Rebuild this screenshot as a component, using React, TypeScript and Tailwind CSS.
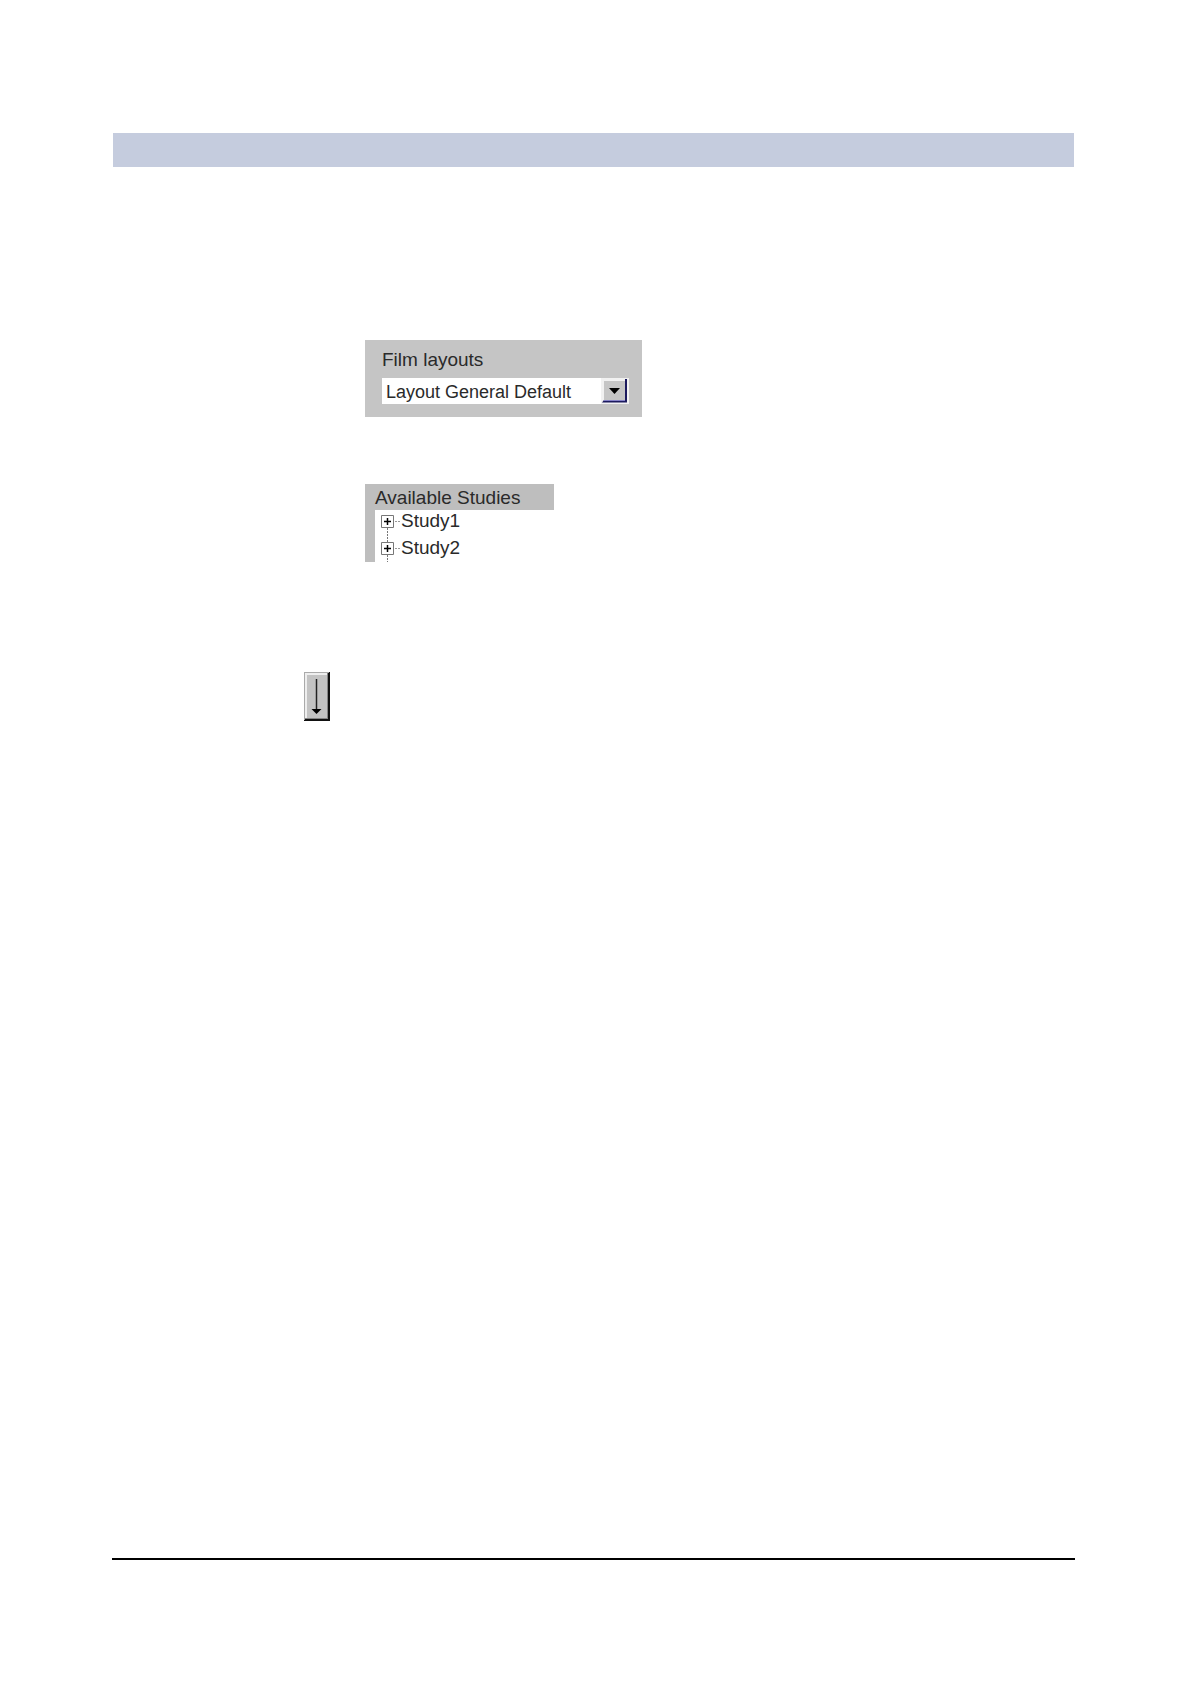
import React, { useState } from 'react';

const layouts = ['Layout General Default'];
const studies = ['Study1', 'Study2'];

const FilmLayouts: React.FC = () => {
  const [layout, setLayout] = useState(layouts[0]);

  return (
    <div className="w-[277px] bg-[#c5c5c5] pt-1.5 pr-[13px] pb-[13px] pl-[17px]">
      <label htmlFor="film-layout" className="block pb-1 text-[19px] leading-7">
        Film layouts
      </label>
      <div className="relative h-[26px]">
        <select
          id="film-layout"
          value={layout}
          onChange={(e) => setLayout(e.target.value)}
          className="block h-full w-full appearance-none bg-white pt-0.5 pl-1 leading-6 outline-none"
        >
          {layouts.map((name) => (
            <option key={name}>{name}</option>
          ))}
        </select>
        <svg
          className="pointer-events-none absolute top-0 right-0"
          width="28"
          height="26"
          viewBox="0 0 28 26"
          aria-hidden="true"
        >
          <path d="M0 0h28v26H0z" fill="#f1f1f1" />
          <path d="M1 24.500L3 22H24V1h2v23.500z" fill="#1c1a5e" />
          <path d="M3 3h21v19H3z" fill="#c5c5c5" />
          <path d="M3 22.500h21" stroke="#8581c8" />
          <path d="M8 10h11l-5.500 6z" fill="#000" />
        </svg>
      </div>
    </div>
  );
};

interface ExpandIconProps {
  first: boolean;
}

const ExpandIcon: React.FC<ExpandIconProps> = ({ first }) => (
  <svg width="20" height="27" viewBox="0 0 20 27" className="shrink-0" aria-hidden="true">
    <path d={first ? 'M6.500 18v9' : 'M6.500 0v27'} stroke="#777" strokeDasharray="2 1" />
    <path d="M14 11.500h5" stroke="#999" strokeDasharray="2 1" />
    <path d="M.5 5.500h12v12H.5z" fill="#fff" stroke="#777" />
    <path d="M3 11.500h7M6.500 8v7" stroke="#000" strokeWidth="1.500" />
  </svg>
);

const AvailableStudies: React.FC = () => (
  <div className="w-[189px] text-[19px]">
    <h2 className="bg-[#bebebe] pt-0.5 pl-[10px] leading-6">Available Studies</h2>
    <ul className="h-[52px] overflow-hidden border-l-[10px] border-[#bebebe] bg-white pl-[6px]">
      {studies.map((study, i) => (
        <li key={study} className="h-[27px]">
          <button type="button" className="flex items-start leading-[22px]">
            <ExpandIcon first={i === 0} />
            {study}
          </button>
        </li>
      ))}
    </ul>
  </div>
);

export default function App() {
  return (
    <div className="flex min-h-screen flex-col bg-white pt-[133px] pr-[115px] pb-[124px] pl-28 font-['Liberation_Sans',Arial,sans-serif] text-[18px] text-[#2a2a2a]">
      <header className="mx-px h-[34px] bg-[#c5ccde]" />
      <main className="grow pt-[173px]">
        <div className="flex flex-col gap-[67px] pl-[253px]">
          <FilmLayouts />
          <AvailableStudies />
        </div>
        <div className="pt-[110px] pl-48">
          <button type="button" aria-label="Move down" className="block">
            <svg width="26" height="49" viewBox="0 0 26 49">
              <path d="M0 0h26v49H0z" fill="#111" />
              <path d="M0 0h25v1H1v47H0z" fill="#aaa" />
              <path d="M1 1h23v46H1z" fill="#858585" />
              <path d="M1 1h22v2H3v43H1z" fill="#eee" />
              <path d="M3 3h20v43H3z" fill="#c3c3c3" />
              <path d="M12.500 7v31" stroke="#222" strokeWidth="1.500" />
              <path d="M7.500 37h10l-5 5z" fill="#000" />
            </svg>
          </button>
        </div>
      </main>
      <footer className="border-t-2 border-black" />
    </div>
  );
}
